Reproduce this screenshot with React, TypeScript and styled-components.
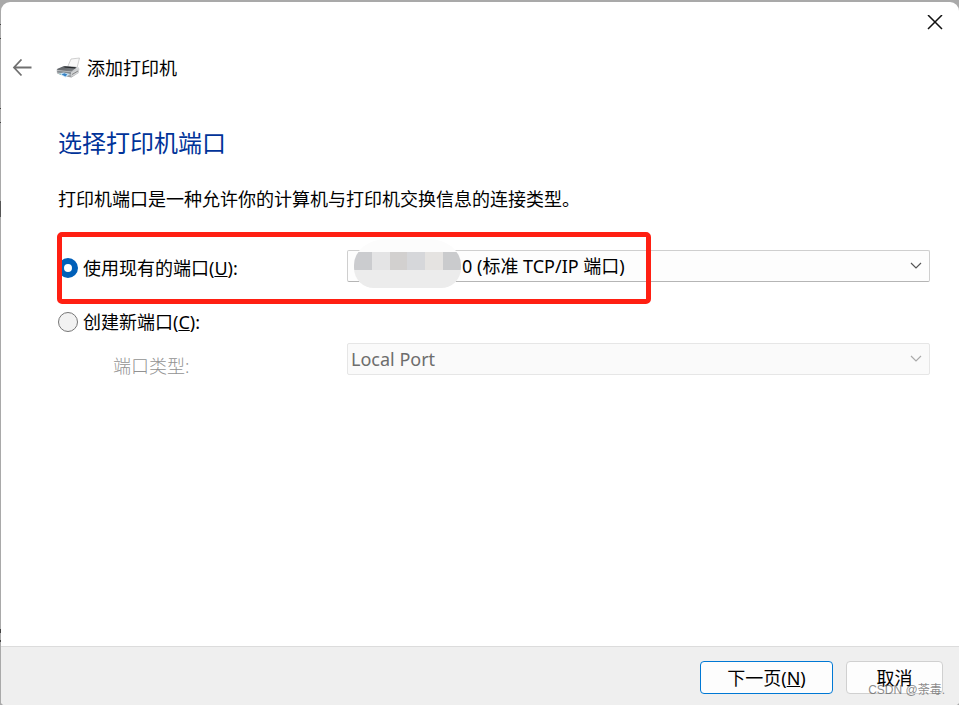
import React, { useState } from "react";
import styled, { createGlobalStyle } from "styled-components";

const GlobalStyle = createGlobalStyle`
  * { box-sizing: border-box; }
  body {
    margin: 0;
    background: #a9a9a9;
    color: #000;
    font: 18px/24px "Noto Sans", "Noto Sans CJK SC", sans-serif;
  }
  button, select, input { font: inherit; color: inherit; margin: 0; }
`;

const Desktop = styled.div`
  display: flex;
  min-height: 100vh;
  padding: 2px 0 0 1px;
  background: linear-gradient(#444, #444) 0 24px / 1px 1px no-repeat,
    linear-gradient(#444, #444) 0 38px / 1px 1px no-repeat,
    linear-gradient(#444, #444) 0 108px / 1px 1px no-repeat,
    linear-gradient(#444, #444) 0 122px / 1px 1px no-repeat,
    linear-gradient(#555, #555) 0 201px / 1px 16px no-repeat,
    linear-gradient(#444, #444) 0 629px / 1px 4px no-repeat,
    linear-gradient(#444, #444) 0 640px / 1px 2px no-repeat,
    #a9a9a9;
`;

const Window = styled.main`
  position: relative;
  display: flex;
  flex: 1;
  flex-direction: column;
  overflow: hidden;
  border-radius: 9px 9px 4px 4px;
  background: #fff;
`;

const TitleBar = styled.header`
  display: flex;
  justify-content: flex-end;
  padding: 10px 13px 0 0;
`;

const IconButton = styled.button`
  display: grid;
  place-items: center;
  width: 22px;
  height: 22px;
  padding: 0;
  border: 0;
  background: none;
`;

const WizardHeader = styled.div`
  display: flex;
  align-items: center;
  height: 24px;
  margin-top: 22px;
  padding-left: 10px;
`;

const PrinterSvg = styled.svg`
  margin: 0 7px 0 23px;
`;

const Content = styled.section`
  flex: 1;
  padding: 47px 29px 24px 57px;
`;

const Heading = styled.h1`
  margin: 0;
  color: #003399;
  font-size: 24px;
  font-weight: 400;
  line-height: 32px;
`;

const Description = styled.p`
  margin: 28px 0 21px;
`;

const Options = styled.div`
  position: relative;
  display: grid;
  grid-template-columns: 289px 1fr;
  grid-template-rows: 72px 36px 38px;
  align-items: center;
`;

const RadioLabel = styled.label`
  display: flex;
  grid-column: 1;
  align-items: center;
  gap: 5px;
`;

const Radio = styled.input`
  appearance: none;
  width: 20px;
  height: 20px;
  border: 1px solid #767676;
  border-radius: 50%;
  background: #f2f2f2;
  &:checked {
    border: 6px solid #005fb8;
    background: #fff;
  }
`;

const TypeLabel = styled.label<{ $disabled: boolean }>`
  grid-column: 1;
  align-self: end;
  padding-left: 55px;
  color: ${(p) => (p.$disabled ? "#929292" : "#000")};
  font-weight: 300;
`;

const SelectFrame = styled.div<{ $raised?: boolean }>`
  position: relative;
  grid-column: 2;
  margin-bottom: ${(p) => (p.$raised ? "4px" : "0")};
`;

const Select = styled.select<{ $indent: number }>`
  display: block;
  appearance: none;
  width: 100%;
  height: 32px;
  padding: 0 32px 0 ${(p) => p.$indent}px;
  border: 1px solid #cfcfcf;
  border-bottom-color: #b5b5b5;
  border-radius: 2px;
  background: #fdfdfd;
  &:disabled {
    border-color: #e6e6e6;
    background: #fafafa;
    color: #6d6d6d;
    opacity: 1;
  }
`;

const Chevron = styled.svg`
  position: absolute;
  top: 12px;
  right: 8px;
  pointer-events: none;
`;

const Redaction = styled.div`
  position: absolute;
  top: -11px;
  left: 7px;
  width: 107px;
  height: 49px;
  overflow: hidden;
  border-radius: 32px 32px 20px 20px / 26px 26px 20px 20px;
  background: #fcfcfc;
  pointer-events: none;
`;

const MosaicRow = styled.div`
  display: flex;
  margin-top: 13px;
  height: 18px;
`;

const MosaicCell = styled.span<{ $color: string }>`
  flex: 1;
  background: ${(p) => p.$color};
`;

const MosaicBase = styled.div`
  height: 18px;
  background: #ececec;
`;

const Highlight = styled.div`
  position: absolute;
  top: 0;
  left: -1px;
  width: 594px;
  height: 72px;
  border: 5px solid #ff1f12;
  border-radius: 5px;
  pointer-events: none;
`;

const Footer = styled.footer`
  display: flex;
  justify-content: flex-end;
  gap: 13px;
  padding: 14px 16px 11px;
  border-top: 1px solid #dcdcdc;
  background: #efefef;
`;

const Button = styled.button<{ $primary?: boolean }>`
  min-width: ${(p) => (p.$primary ? "133px" : "97px")};
  height: 33px;
  padding: 0 16px;
  border: 1px solid ${(p) => (p.$primary ? "#0078d4" : "#d0d0d0")};
  border-radius: 4px;
  background: #fdfdfd;
`;

const Watermark = styled.span`
  position: absolute;
  right: 14px;
  bottom: 6px;
  color: rgba(100, 100, 100, 0.75);
  font-family: "Liberation Sans", "Noto Sans CJK SC", sans-serif;
  font-size: 12px;
  line-height: 18px;
  pointer-events: none;
`;

const mosaic = ["#cbcccf", "#e4e4e5", "#d2d0cf", "#d6d7da", "#e5e3e1", "#cacbcd"];

function PrinterIcon() {
  return (
    <PrinterSvg width="24" height="22" viewBox="0 0 24 22" aria-hidden="true">
      <defs>
        <linearGradient id="body" x1="0" y1="0" x2="0" y2="1">
          <stop offset="0" stopColor="#e1e3e5" />
          <stop offset="1" stopColor="#96999c" />
        </linearGradient>
        <linearGradient id="lid" x1="0" y1="0" x2="1" y2="1">
          <stop offset="0" stopColor="#55595d" />
          <stop offset="1" stopColor="#888c90" />
        </linearGradient>
      </defs>
      <path d="M11.5 10 15 2 23.5 1 21 11z" fill="#f8f8f8" stroke="#c4c4c4" strokeWidth=".8" />
      <path d="M0.5 12.5 8 9.5 22.5 10 23.5 12 22.5 16 15.5 20.5 10 19.5 1 16.5z" fill="url(#body)" />
      <path d="M1 12 8 9 21 10 15.5 14.5 1.5 13z" fill="url(#lid)" />
      <path d="M8.5 10 19.5 10.8" stroke="#25282b" strokeWidth="1.2" />
      <path d="M1 13.8 15 15.3 15 17 1.5 15.5z" fill="#858b90" />
      <path d="M15 15.5 23 11.5 22.3 16 15.3 20z" fill="#d0d2d4" />
      <path d="M16 17.5 22 14" stroke="#858585" strokeWidth="1" />
      <path d="m2.5 16.5 5-1 6.5 1.5-4.5 3.5z" fill="#c8e2f3" />
      <path d="m5.5 17.3 3-1 2.8 1.2-2 2z" fill="#3581c4" />
      <path d="m3 16.7 2.2.1-1 1z" fill="#5bad90" />
    </PrinterSvg>
  );
}

function ChevronIcon({ color }: { color: string }) {
  return (
    <Chevron width="12" height="8" viewBox="0 0 12 8" fill="none" aria-hidden="true">
      <path d="m1 1 5 5 5-5" stroke={color} strokeWidth="1.2" />
    </Chevron>
  );
}

export default function App() {
  const [mode, setMode] = useState("existing");
  const creating = mode === "new";
  return (
    <>
      <GlobalStyle />
      <Desktop>
        <Window>
          <TitleBar>
            <IconButton aria-label="关闭">
              <svg width="16" height="16" viewBox="0 0 16 16" fill="none">
                <path d="m1 0 14 14M15 0 1 14" stroke="#111" strokeWidth="1.5" />
              </svg>
            </IconButton>
          </TitleBar>
          <WizardHeader>
            <IconButton aria-label="返回">
              <svg width="20" height="18" viewBox="0 0 20 18" fill="none">
                <path d="M19.5 8.5H2M9.5 .5 2 8.5l7.5 8" stroke="#707070" strokeWidth="1.8" />
              </svg>
            </IconButton>
            <PrinterIcon />
            <span>添加打印机</span>
          </WizardHeader>
          <Content>
            <Heading>选择打印机端口</Heading>
            <Description>打印机端口是一种允许你的计算机与打印机交换信息的连接类型。</Description>
            <Options>
              <RadioLabel>
                <Radio type="radio" name="mode" checked={!creating} onChange={() => setMode("existing")} />
                <span>使用现有的端口(<u>U</u>):</span>
              </RadioLabel>
              <SelectFrame $raised>
                <Select $indent={114} aria-label="使用现有的端口">
                  <option>0 (标准 TCP/IP 端口)</option>
                </Select>
                <Redaction>
                  <MosaicRow>
                    {mosaic.map((c) => (
                      <MosaicCell key={c} $color={c} />
                    ))}
                  </MosaicRow>
                  <MosaicBase />
                </Redaction>
                <ChevronIcon color="#555" />
              </SelectFrame>
              <RadioLabel>
                <Radio type="radio" name="mode" checked={creating} onChange={() => setMode("new")} />
                <span>创建新端口(<u>C</u>):</span>
              </RadioLabel>
              <TypeLabel htmlFor="port-type" $disabled={!creating}>
                端口类型:
              </TypeLabel>
              <SelectFrame>
                <Select id="port-type" $indent={3} disabled={!creating}>
                  <option>Local Port</option>
                </Select>
                <ChevronIcon color="#aaa" />
              </SelectFrame>
              <Highlight />
            </Options>
          </Content>
          <Footer>
            <Button $primary>下一页(<u>N</u>)</Button>
            <Button>取消</Button>
          </Footer>
          <Watermark>CSDN @荼毒.</Watermark>
        </Window>
      </Desktop>
    </>
  );
}
